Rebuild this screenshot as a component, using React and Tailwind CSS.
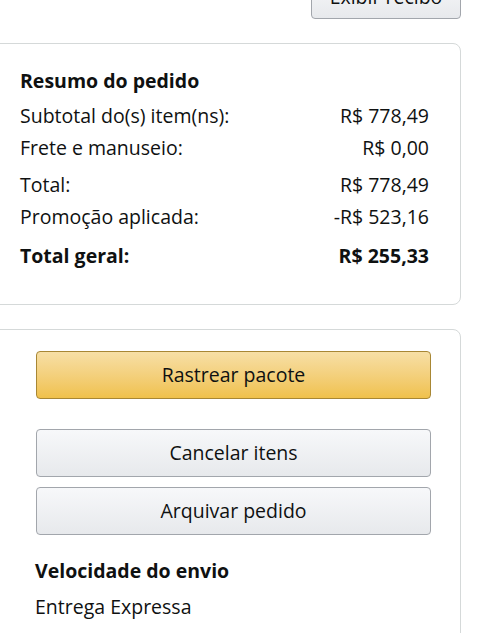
import React from "react";

const font = { fontFamily: '"Open Sans", "Noto Sans", Arial, sans-serif' };

function Row({ label, value, bold, className = "" }) {
  return (
    <div className={`flex justify-between h-[32px] leading-[32px] ${bold ? "font-bold" : ""} ${className}`}>
      <span>{label}</span>
      <span>{value}</span>
    </div>
  );
}

const grayBtn =
  "w-full h-[48px] rounded-[4px] border border-[#a2a6ac] bg-gradient-to-b from-[#f7f8fa] to-[#e7e9ec] text-[#0f1111] text-[19.5px]";

export default function App() {
  return (
    <div className="w-[500px] h-[633px] overflow-hidden bg-white text-[#0f1111] text-[19.5px]" style={font}>
      <div className="flex justify-end pr-[39px]">
        <button className="mt-[-21px] w-[150px] h-[40px] pb-[5px] rounded-[4px] border border-[#a2a6ac] bg-gradient-to-b from-[#f7f8fa] to-[#e7e9ec] text-[#0f1111] text-[19.5px] leading-[26px]">
          Exibir recibo
        </button>
      </div>

      <div className="ml-[-12px] mt-[24px] w-[473px] rounded-[8px] border border-[#d5d9d9] pl-[31px] pr-[31px] pt-[24px] pb-[32px]">
        <div className="font-bold leading-[26px] mb-[6px]">Resumo do pedido</div>
        <Row label="Subtotal do(s) item(ns):" value="R$ 778,49" />
        <Row label="Frete e manuseio:" value="R$ 0,00" />
        <Row label="Total:" value="R$ 778,49" className="mt-[5px]" />
        <Row label="Promoção aplicada:" value="-R$ 523,16" />
        <Row label="Total geral:" value="R$ 255,33" bold className="mt-[7px]" />
      </div>

      <div className="ml-[-12px] mt-[24px] w-[473px] h-[340px] rounded-[8px] border border-[#d5d9d9] pl-[47px] pr-[29px] pt-[21px]">
        <button className="w-full h-[48px] rounded-[4px] border border-[#a88734] bg-gradient-to-b from-[#f7dfa5] to-[#f0c14b] text-[#0f1111] text-[19.5px]">
          Rastrear pacote
        </button>
        <button className={`mt-[30px] ${grayBtn}`}>Cancelar itens</button>
        <button className={`mt-[10px] ${grayBtn}`}>Arquivar pedido</button>
        <div className="mt-[23px] ml-[-1px] font-bold leading-[26px]">Velocidade do envio</div>
        <div className="mt-[10px] ml-[-1px] leading-[26px]">Entrega Expressa</div>
      </div>
    </div>
  );
}
